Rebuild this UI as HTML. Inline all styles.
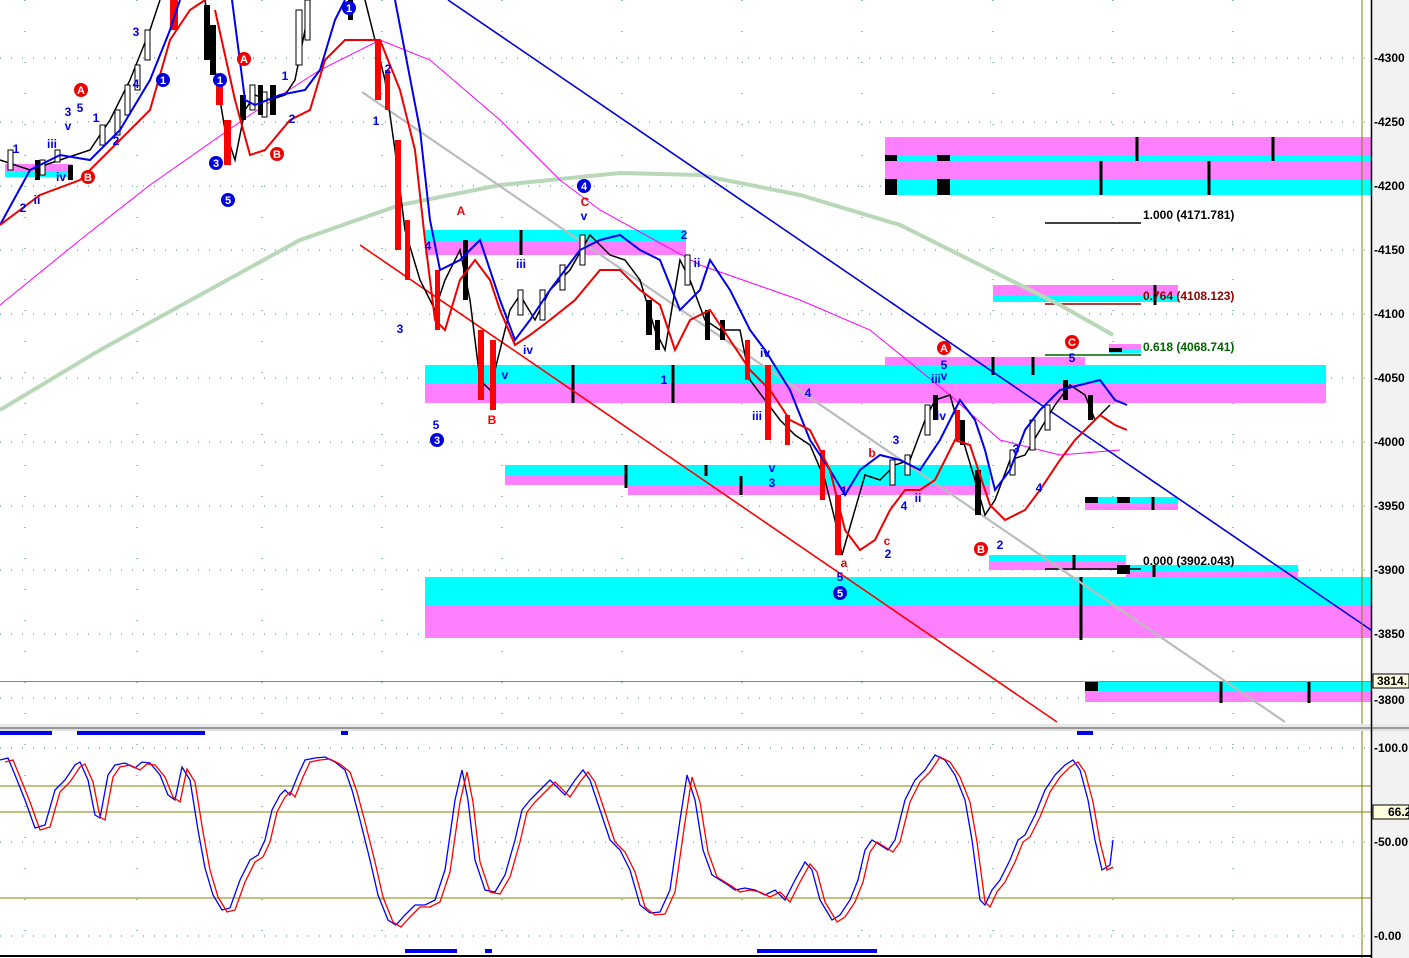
<!DOCTYPE html>
<html><head><meta charset="utf-8"><style>
html,body{margin:0;padding:0;background:#fff;}
svg{display:block;font-family:"Liberation Sans",sans-serif;}
</style></head><body>
<svg width="1409" height="958" viewBox="0 0 1409 958" xmlns="http://www.w3.org/2000/svg">
<rect width="1409" height="958" fill="#fff"/>
<rect x="1372" y="0" width="37" height="958" fill="#f2f2f2"/>
<g stroke="#2a8a8a" stroke-width="1" stroke-dasharray="1,10">
<line x1="0" y1="58" x2="1371" y2="58"/><line x1="0" y1="122" x2="1371" y2="122"/><line x1="0" y1="186" x2="1371" y2="186"/><line x1="0" y1="250" x2="1371" y2="250"/><line x1="0" y1="314" x2="1371" y2="314"/><line x1="0" y1="378" x2="1371" y2="378"/><line x1="0" y1="442" x2="1371" y2="442"/><line x1="0" y1="506" x2="1371" y2="506"/><line x1="0" y1="570" x2="1371" y2="570"/><line x1="0" y1="634" x2="1371" y2="634"/><line x1="0" y1="698" x2="1371" y2="698"/>
<line x1="0" y1="748" x2="1371" y2="748"/><line x1="0" y1="842" x2="1371" y2="842"/><line x1="0" y1="936" x2="1371" y2="936"/>
</g>
<g stroke="#2a8a8a" stroke-width="1" stroke-dasharray="1,30">
<line x1="25" y1="0" x2="25" y2="958"/><line x1="137" y1="0" x2="137" y2="958"/><line x1="262" y1="0" x2="262" y2="958"/><line x1="382" y1="0" x2="382" y2="958"/><line x1="502" y1="0" x2="502" y2="958"/><line x1="622" y1="0" x2="622" y2="958"/><line x1="742" y1="0" x2="742" y2="958"/><line x1="862" y1="0" x2="862" y2="958"/><line x1="993" y1="0" x2="993" y2="958"/><line x1="1113" y1="0" x2="1113" y2="958"/><line x1="1233" y1="0" x2="1233" y2="958"/>
</g>
<g>
<rect x="885" y="137" width="486" height="18" fill="#ff80ff"/><rect x="885" y="155" width="486" height="6" fill="#00ffff"/>
<rect x="885" y="161" width="486" height="18" fill="#ff80ff"/><rect x="885" y="179" width="486" height="16" fill="#00ffff"/>
<rect x="885" y="155" width="12" height="6" fill="#000"/><rect x="937" y="155" width="13" height="6" fill="#000"/>
<rect x="885" y="179" width="12" height="16" fill="#000"/><rect x="937" y="179" width="13" height="16" fill="#000"/>
<rect x="993" y="285" width="185" height="10" fill="#ff80ff"/><rect x="993" y="295" width="185" height="7" fill="#00ffff"/>
<rect x="1109" y="344" width="32" height="5" fill="#ff80ff"/><rect x="1109" y="349" width="32" height="4" fill="#00ffff"/><rect x="1109" y="348" width="13" height="4" fill="#000"/>
<rect x="885" y="357" width="200" height="8" fill="#ff80ff"/>
<rect x="425" y="365" width="901" height="19" fill="#00ffff"/><rect x="425" y="384" width="901" height="19" fill="#ff80ff"/>
<rect x="425" y="230" width="261" height="12" fill="#00ffff"/><rect x="425" y="242" width="261" height="13" fill="#ff80ff"/>
<rect x="505" y="465" width="485" height="11" fill="#00ffff"/><rect x="505" y="476" width="123" height="9" fill="#ff80ff"/>
<rect x="628" y="476" width="362" height="10" fill="#00ffff"/><rect x="628" y="486" width="362" height="9" fill="#ff80ff"/>
<rect x="1085" y="497" width="93" height="6" fill="#00ffff"/><rect x="1085" y="503" width="93" height="7" fill="#ff80ff"/>
<rect x="1085" y="497" width="13" height="6" fill="#000"/><rect x="1117" y="497" width="13" height="6" fill="#000"/>
<rect x="989" y="555" width="137" height="7" fill="#00ffff"/><rect x="989" y="562" width="137" height="8" fill="#ff80ff"/>
<rect x="1126" y="565" width="172" height="7" fill="#00ffff"/><rect x="1126" y="572" width="172" height="5" fill="#ff80ff"/><rect x="1117" y="565" width="13" height="9" fill="#000"/>
<rect x="425" y="577" width="946" height="28" fill="#00ffff"/><rect x="425" y="605" width="946" height="33" fill="#ff80ff"/>
<rect x="1085" y="681" width="286" height="10" fill="#00ffff"/><rect x="1085" y="691" width="286" height="11" fill="#ff80ff"/><rect x="1085" y="681" width="13" height="10" fill="#000"/>
<rect x="5" y="164" width="67" height="7" fill="#ff80ff"/><rect x="5" y="171" width="67" height="6" fill="#00ffff"/>
</g>
<g stroke="#000" stroke-width="3">
<line x1="1137" y1="137" x2="1137" y2="161"/><line x1="1273" y1="137" x2="1273" y2="161"/><line x1="1101" y1="161" x2="1101" y2="195"/><line x1="1209" y1="161" x2="1209" y2="195"/>
<line x1="521" y1="230" x2="521" y2="255"/><line x1="573" y1="365" x2="573" y2="403"/><line x1="673" y1="365" x2="673" y2="403"/>
<line x1="993" y1="357" x2="993" y2="375"/><line x1="1033" y1="357" x2="1033" y2="375"/>
<line x1="626" y1="465" x2="626" y2="488"/><line x1="706" y1="465" x2="706" y2="476"/><line x1="741" y1="476" x2="741" y2="495"/>
<line x1="1153" y1="497" x2="1153" y2="510"/><line x1="1074" y1="555" x2="1074" y2="570"/><line x1="1154" y1="565" x2="1154" y2="577"/>
<line x1="1081" y1="577" x2="1081" y2="640"/><line x1="1221" y1="681" x2="1221" y2="703"/><line x1="1309" y1="681" x2="1309" y2="703"/>
<line x1="1155" y1="285" x2="1155" y2="305"/>
</g>
<line x1="0" y1="681.5" x2="1371" y2="681.5" stroke="#888" stroke-width="1"/>
<g stroke-width="1.5">
<line x1="1045" y1="223" x2="1141" y2="223" stroke="#000"/>
<line x1="1045" y1="304" x2="1141" y2="304" stroke="#8b0000"/>
<line x1="1045" y1="355" x2="1141" y2="355" stroke="#006400"/>
<line x1="1045" y1="569" x2="1141" y2="569" stroke="#000"/>
</g>
<polyline fill="none" stroke="#b8d8b8" stroke-width="4" points="0,410 100,350 200,295 300,240 400,205 500,185 620,173 700,175 800,195 900,225 1000,275 1060,305 1113,335"/>
<polyline fill="none" stroke="#ff00ff" stroke-width="1" points="0,305 80,240 150,185 250,115 320,70 380,40 430,60 500,120 560,180 600,210 700,265 800,300 870,330 950,395 1000,440 1060,455 1120,450"/>
<line x1="448" y1="0" x2="1371" y2="630" stroke="#0000dd" stroke-width="1.6"/>
<line x1="360" y1="245" x2="1057" y2="722" stroke="#ff0000" stroke-width="1.6"/>
<line x1="362" y1="92" x2="1285" y2="722" stroke="#bbb" stroke-width="2.2"/>
<g fill="none" stroke="#000" stroke-width="1.5">
<polyline points="0,160 30,170 60,160 90,150 110,120 130,80 150,30 160,0"/>
<polyline points="205,0 215,70 225,130 235,160 245,110 255,95 270,100 285,95 295,80 305,30 310,0"/>
<polyline points="365,0 375,40 385,80 395,150 405,230 420,280 435,310 445,280 460,250 470,300 480,380 490,390 500,350 510,310 520,295 535,320 550,290 570,270 590,235 610,255 625,260 640,280 655,330 665,350 680,260 690,280 705,320 720,330 740,330 750,380 765,400 780,420 795,435 810,445 825,480 835,520 842,555 852,520 865,475 880,480 895,465 910,460 925,420 935,400 950,395 960,430 975,480 985,515 995,500 1010,460 1025,455 1040,430 1055,405 1070,385 1085,395 1095,420 1110,405"/>
</g>
<!-- extra candles -->
<g fill="#fff" stroke="#000" stroke-width="1">
<rect x="8" y="150" width="5" height="20"/><rect x="40" y="160" width="5" height="15"/><rect x="55" y="150" width="5" height="12"/><rect x="100" y="125" width="5" height="20"/><rect x="115" y="110" width="5" height="25"/><rect x="125" y="85" width="5" height="30"/><rect x="135" y="65" width="5" height="25"/><rect x="145" y="30" width="5" height="30"/>
<rect x="250" y="85" width="5" height="25"/><rect x="262" y="92" width="5" height="25"/><rect x="296" y="10" width="6" height="55"/><rect x="305" y="0" width="5" height="40"/>
<rect x="518" y="290" width="5" height="25"/><rect x="540" y="290" width="5" height="30"/><rect x="560" y="265" width="5" height="25"/><rect x="580" y="235" width="5" height="30"/><rect x="685" y="255" width="5" height="30"/><rect x="890" y="460" width="5" height="25"/><rect x="905" y="455" width="5" height="20"/><rect x="925" y="405" width="5" height="30"/><rect x="1010" y="450" width="5" height="25"/><rect x="1030" y="420" width="5" height="30"/><rect x="1045" y="405" width="5" height="25"/>
</g>
<g fill="#000">
<rect x="204" y="5" width="6" height="55"/><rect x="210" y="25" width="6" height="50"/><rect x="240" y="95" width="6" height="25"/><rect x="258" y="85" width="5" height="30"/><rect x="270" y="85" width="6" height="30"/>
<rect x="463" y="240" width="5" height="60"/><rect x="646" y="300" width="6" height="35"/><rect x="705" y="310" width="5" height="30"/><rect x="720" y="320" width="5" height="20"/>
<rect x="933" y="395" width="5" height="25"/><rect x="975" y="470" width="6" height="45"/><rect x="1063" y="380" width="5" height="20"/><rect x="1088" y="395" width="5" height="25"/>
<rect x="35" y="160" width="5" height="20"/><rect x="68" y="165" width="5" height="15"/><rect x="348" y="0" width="5" height="20"/><rect x="655" y="320" width="5" height="30"/><rect x="960" y="420" width="5" height="25"/>
</g>
<g fill="#ff0000">
<rect x="170" y="0" width="8" height="30"/><rect x="216" y="75" width="7" height="30"/><rect x="224" y="120" width="7" height="45"/>
<rect x="375" y="40" width="6" height="60"/><rect x="385" y="70" width="5" height="40"/><rect x="395" y="140" width="6" height="110"/><rect x="405" y="220" width="5" height="60"/>
<rect x="435" y="270" width="5" height="60"/><rect x="478" y="330" width="6" height="70"/><rect x="490" y="340" width="6" height="70"/>
<rect x="745" y="340" width="5" height="40"/><rect x="765" y="365" width="6" height="75"/><rect x="785" y="415" width="5" height="30"/><rect x="820" y="450" width="5" height="50"/><rect x="835" y="495" width="6" height="60"/><rect x="955" y="410" width="5" height="30"/>
</g>
<g fill="none" stroke-width="2">
<polyline stroke="#0000ee" points="0,225 30,170 60,155 90,160 120,130 150,80 170,30 180,0"/>
<polyline stroke="#0000ee" points="232,0 245,100 255,105 280,95 305,90 320,70 335,20 345,0"/>
<polyline stroke="#0000ee" points="395,0 420,130 430,220 440,270 460,260 480,240 500,300 515,340 530,320 550,290 580,250 600,240 620,235 640,250 660,260 680,310 700,290 710,260 730,290 750,330 765,350 790,390 810,440 830,470 845,495 860,470 880,455 900,460 920,470 940,440 960,400 975,420 985,450 995,490 1010,470 1025,430 1040,410 1060,390 1080,385 1100,380 1115,400 1127,405"/>
<polyline stroke="#ee0000" points="0,225 40,195 80,180 120,140 150,110 170,40 190,10 205,0"/>
<polyline stroke="#ee0000" points="215,10 235,100 250,155 265,150 290,120 310,110 325,60 345,40 380,40 400,90 415,150 425,240 435,320 445,330 460,280 475,260 490,280 500,310 515,345 530,335 550,320 575,300 600,270 620,270 640,290 660,305 675,350 690,320 710,310 730,340 750,370 770,390 790,420 810,430 830,470 845,530 860,550 875,540 890,510 905,490 920,490 935,480 955,440 970,445 990,505 1005,520 1025,510 1040,490 1060,460 1075,440 1090,425 1100,415 1115,425 1127,430"/>
</g>
<g font-size="11" font-weight="bold" text-anchor="middle" fill="#fff">
<circle cx="163" cy="80" r="7" fill="#0000dd"/><text x="163" y="84">1</text>
<circle cx="349" cy="8" r="7" fill="#0000dd"/><text x="349" y="12">1</text>
<circle cx="220" cy="80" r="7" fill="#0000dd"/><text x="220" y="84">1</text>
<circle cx="216" cy="163" r="7" fill="#0000dd"/><text x="216" y="167">3</text>
<circle cx="437" cy="440" r="7" fill="#0000dd"/><text x="437" y="444">3</text>
<circle cx="228" cy="200" r="7" fill="#0000dd"/><text x="228" y="204">5</text>
<circle cx="840" cy="593" r="7" fill="#0000dd"/><text x="840" y="597">5</text>
<circle cx="584" cy="186" r="7" fill="#0000dd"/><text x="584" y="190">4</text>
<circle cx="81" cy="90" r="7" fill="#ee0000"/><text x="81" y="94">A</text>
<circle cx="244" cy="59" r="7" fill="#ee0000"/><text x="244" y="63">A</text>
<circle cx="944" cy="348" r="7" fill="#ee0000"/><text x="944" y="352">A</text>
<circle cx="88" cy="177" r="7" fill="#ee0000"/><text x="88" y="181">B</text>
<circle cx="277" cy="154" r="7" fill="#ee0000"/><text x="277" y="158">B</text>
<circle cx="981" cy="549" r="7" fill="#ee0000"/><text x="981" y="553">B</text>
<circle cx="1072" cy="342" r="7" fill="#ee0000"/><text x="1072" y="346">C</text>
</g>
<g font-size="12" font-weight="bold" text-anchor="middle" fill="#0000ee">
<text x="23" y="212">2</text><text x="37" y="204">ii</text><text x="61" y="181">iv</text><text x="52" y="148">iii</text><text x="68" y="130">v</text><text x="68" y="116">3</text><text x="80" y="112">5</text><text x="96" y="122">1</text><text x="116" y="145">2</text><text x="136" y="88">4</text><text x="136" y="36">3</text><text x="16" y="153">1</text>
<text x="285" y="80">1</text><text x="292" y="123">2</text><text x="376" y="125">1</text><text x="388" y="73">2</text><text x="400" y="333">3</text><text x="436" y="429">5</text><text x="428" y="250">4</text>
<text x="521" y="268">iii</text><text x="528" y="354">iv</text><text x="505" y="379">v</text><text x="584" y="220">v</text><text x="684" y="239">2</text><text x="697" y="267">ii</text><text x="664" y="384">1</text><text x="765" y="357">iv</text><text x="757" y="420">iii</text><text x="772" y="472">v</text><text x="772" y="487">3</text><text x="808" y="397">4</text><text x="844" y="495">1</text><text x="888" y="558">2</text><text x="896" y="444">3</text><text x="904" y="510">4</text><text x="918" y="502">ii</text><text x="944" y="369">5</text><text x="936" y="383">iii</text><text x="944" y="380">v</text><text x="941" y="420">iv</text><text x="1000" y="549">2</text><text x="1016" y="453">3</text><text x="1039" y="492">4</text><text x="1072" y="362">5</text><text x="840" y="581">5</text>
</g>
<g font-size="12" font-weight="bold" text-anchor="middle" fill="#ee0000">
<text x="461" y="215">A</text><text x="492" y="424">B</text><text x="585" y="206">C</text><text x="844" y="567">a</text><text x="872" y="457">b</text><text x="887" y="545">c</text>
</g>
<g font-size="12" font-weight="bold">
<text x="1143" y="219" fill="#000">1.000 (4171.781)</text>
<text x="1143" y="300" fill="#8b0000">0.764 (4108.123)</text>
<text x="1143" y="351" fill="#006400">0.618 (4068.741)</text>
<text x="1143" y="565" fill="#000">0.000 (3902.043)</text>
</g>
<line x1="1362" y1="0" x2="1362" y2="958" stroke="#808000" stroke-width="1"/>
<g stroke="#808000" stroke-width="1"><line x1="0" y1="786" x2="1371" y2="786"/><line x1="0" y1="812" x2="1371" y2="812"/><line x1="0" y1="898" x2="1371" y2="898"/></g>
<rect x="0" y="724" width="1409" height="3" fill="#e8e8e8"/><rect x="0" y="727" width="1409" height="2" fill="#999"/><rect x="0" y="729" width="1409" height="2" fill="#e0e0e0"/>
<g fill="#0000ee"><rect x="0" y="731" width="52" height="4"/><rect x="77" y="731" width="128" height="4"/><rect x="341" y="731" width="7" height="4"/><rect x="1077" y="731" width="16" height="4"/>
<rect x="405" y="949" width="52" height="4"/><rect x="485" y="949" width="7" height="4"/><rect x="757" y="949" width="120" height="4"/></g>
<g fill="none" stroke-width="1.3">
<polyline stroke="#0000ff" points="0,760 8,758 15,775 25,800 35,828 45,825 55,790 65,780 75,765 80,762 88,780 95,815 100,818 108,775 115,765 125,763 135,768 142,762 150,763 160,775 168,795 175,800 182,767 190,780 198,830 205,868 213,895 222,910 230,908 240,880 250,860 258,855 265,840 272,810 280,795 285,790 290,795 298,775 305,760 315,758 325,757 335,762 345,770 352,790 360,820 370,860 378,895 388,920 396,925 405,915 415,905 425,905 435,900 445,870 455,800 462,770 468,800 475,860 485,890 495,892 505,875 515,840 522,810 530,800 540,790 550,780 565,795 575,780 583,770 590,780 600,810 610,840 620,850 630,870 640,905 650,913 660,912 670,890 680,820 687,775 695,800 703,850 712,875 720,880 728,885 735,890 745,888 755,890 765,895 775,890 785,900 795,880 805,862 812,870 820,900 832,920 840,915 850,900 858,880 865,850 872,840 880,845 888,850 895,840 905,800 915,780 925,770 935,755 945,760 955,775 965,800 972,840 980,900 985,905 992,890 1000,880 1010,860 1018,840 1025,835 1035,815 1045,790 1055,775 1065,765 1073,760 1080,770 1088,800 1095,840 1102,870 1110,865 1113,840"/>
<polyline stroke="#ff0000" transform="translate(5,2)" points="0,760 8,758 15,775 25,800 35,828 45,825 55,790 65,780 75,765 80,762 88,780 95,815 100,818 108,775 115,765 125,763 135,768 142,762 150,763 160,775 168,795 175,800 182,767 190,780 198,830 205,868 213,895 222,910 230,908 240,880 250,860 258,855 265,840 272,810 280,795 285,790 290,795 298,775 305,760 315,758 325,757 335,762 345,770 352,790 360,820 370,860 378,895 388,920 396,925 405,915 415,905 425,905 435,900 445,870 455,800 462,770 468,800 475,860 485,890 495,892 505,875 515,840 522,810 530,800 540,790 550,780 565,795 575,780 583,770 590,780 600,810 610,840 620,850 630,870 640,905 650,913 660,912 670,890 680,820 687,775 695,800 703,850 712,875 720,880 728,885 735,890 745,888 755,890 765,895 775,890 785,900 795,880 805,862 812,870 820,900 832,920 840,915 850,900 858,880 865,850 872,840 880,845 888,850 895,840 905,800 915,780 925,770 935,755 945,760 955,775 965,800 972,840 980,900 985,905 992,890 1000,880 1010,860 1018,840 1025,835 1035,815 1045,790 1055,775 1065,765 1073,760 1080,770 1088,800 1095,840 1102,868 1108,865"/>
</g>
<line x1="0" y1="956" x2="1371" y2="956" stroke="#000" stroke-width="2"/>
<line x1="1371.5" y1="0" x2="1371.5" y2="958" stroke="#000" stroke-width="1.5"/>
<g font-size="12" font-weight="bold" fill="#000">
<text x="1374" y="62">-4300</text><text x="1374" y="126">-4250</text><text x="1374" y="190">-4200</text><text x="1374" y="254">-4150</text><text x="1374" y="318">-4100</text><text x="1374" y="382">-4050</text><text x="1374" y="446">-4000</text><text x="1374" y="510">-3950</text><text x="1374" y="574">-3900</text><text x="1374" y="638">-3850</text><text x="1374" y="704">-3800</text>
<text x="1374" y="752">-100.0</text><text x="1374" y="846">-50.00</text><text x="1374" y="940">-0.00</text>
</g>
<rect x="1373" y="674" width="36" height="14" fill="#ffffe0" stroke="#000"/><text x="1377" y="685" font-size="12" font-weight="bold">3814.</text>
<rect x="1373" y="805" width="36" height="14" fill="#ffffe0" stroke="#000"/><text x="1388" y="816" font-size="12" font-weight="bold">66.2</text>
</svg>
</body></html>
